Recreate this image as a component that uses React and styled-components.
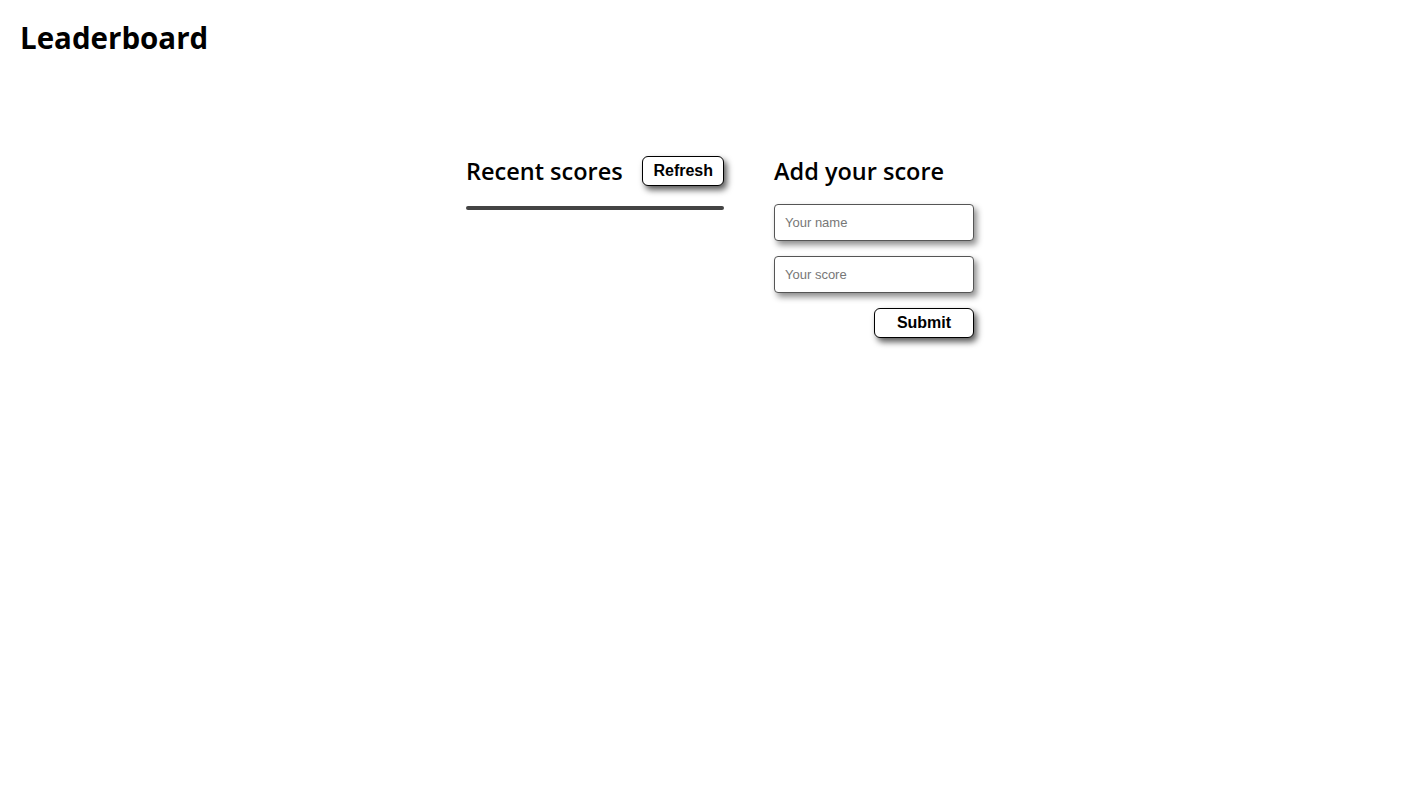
import styled, { createGlobalStyle } from 'styled-components';

const GlobalStyle = createGlobalStyle`
  body {
    margin: 0;
    background: #fff;
    font-family: "Liberation Sans", Arial, sans-serif;
  }
`;

const App = () => {
  return (
    <>
      <GlobalStyle />
      <Page>
        <Title>Leaderboard</Title>
        <Columns>
          <ScoresPanel>
            <PanelHeader>
              <SectionTitle>Recent scores</SectionTitle>
              <Button>Refresh</Button>
            </PanelHeader>
            <Divider />
          </ScoresPanel>
          <FormPanel>
            <SectionTitle>Add your score</SectionTitle>
            <Input placeholder="Your name" />
            <Input placeholder="Your score" />
            <SubmitRow>
              <Button wide>Submit</Button>
            </SubmitRow>
          </FormPanel>
        </Columns>
      </Page>
    </>
  );
};

export default App;

const Page = styled.div`
  padding: 18px 20px;
`;

const Title = styled.h1`
  margin: 0;
  font-family: "Open Sans", "DejaVu Sans", sans-serif;
  font-size: 29.5px;
  font-weight: 700;
  line-height: 40px;
  color: #000;
`;

const Columns = styled.div`
  display: flex;
  justify-content: center;
  gap: 50px;
  margin-top: 96px;
  padding-left: 13px;
`;

const ScoresPanel = styled.div`
  width: 258px;
`;

const PanelHeader = styled.div`
  display: flex;
  align-items: center;
  justify-content: space-between;
  height: 34px;
`;

const SectionTitle = styled.h2`
  margin: 0;
  font-family: "Open Sans", "DejaVu Sans", sans-serif;
  font-size: 23.5px;
  font-weight: 600;
  line-height: 34px;
  color: #000;
`;

const Divider = styled.div`
  height: 4px;
  margin-top: 18px;
  border-radius: 2px;
  background: #444;
`;

const FormPanel = styled.div`
  width: 200px;
  display: flex;
  flex-direction: column;
  gap: 15px;

  & > h2 {
    margin-bottom: 1px;
  }
`;

const Input = styled.input`
  box-sizing: border-box;
  width: 200px;
  height: 37px;
  padding: 0 10px;
  border: 1px solid #555;
  border-radius: 4px;
  box-shadow: 3px 4px 6px rgba(0, 0, 0, 0.45);
  font-family: "Liberation Sans", Arial, sans-serif;
  font-size: 13px;
  outline: none;

  &::placeholder {
    color: #777;
  }
`;

const SubmitRow = styled.div`
  display: flex;
  justify-content: flex-end;
`;

const Button = styled.button`
  box-sizing: border-box;
  width: ${props => (props.wide ? '100px' : 'auto')};
  height: 30px;
  padding: 0 10px;
  background: #fff;
  border: 1px solid #000;
  border-radius: 6px;
  box-shadow: 3px 4px 6px rgba(0, 0, 0, 0.65);
  font-family: "Liberation Sans", Arial, sans-serif;
  font-size: 16px;
  font-weight: bold;
  color: #000;
  cursor: pointer;
`;
